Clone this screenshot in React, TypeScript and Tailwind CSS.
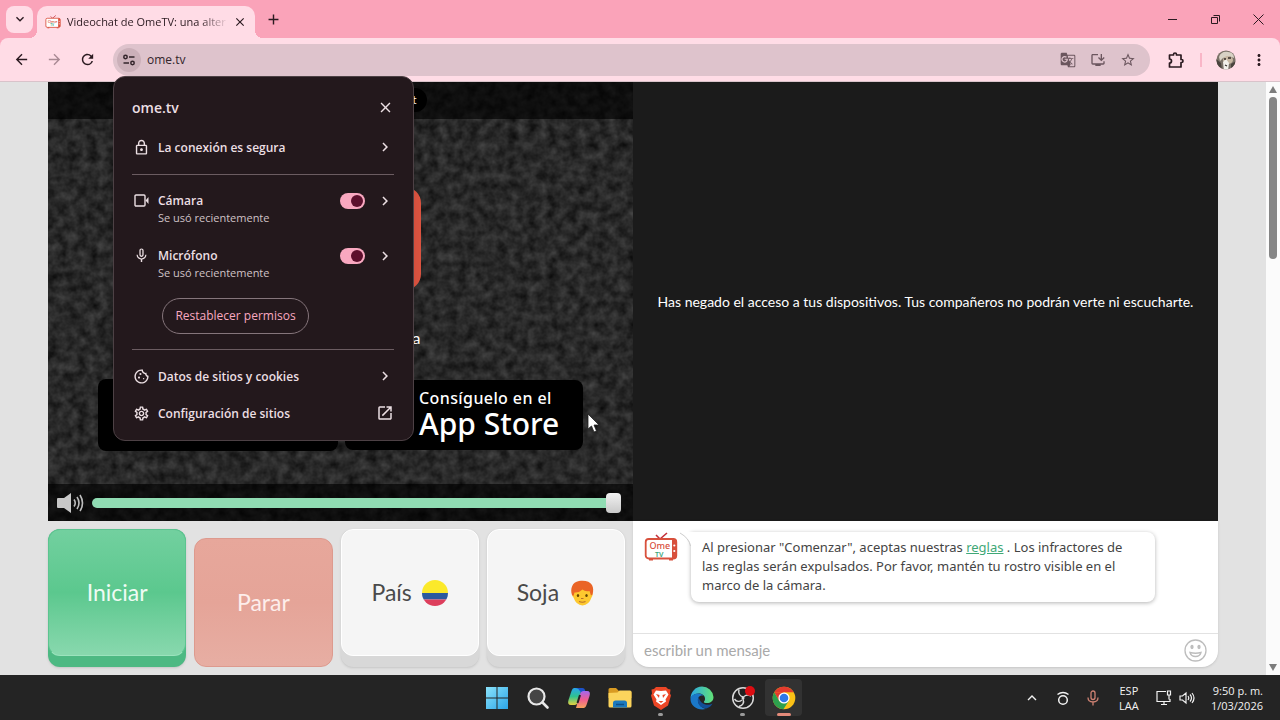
import React from 'react';
import type { ReactNode } from 'react';
import {
  MdAdd,
  MdArrowBack,
  MdArrowForward,
  MdChevronRight,
  MdClose,
  MdGTranslate,
  MdKeyboardArrowDown,
  MdMoreVert,
  MdOpenInNew,
  MdOutlineCookie,
  MdOutlineInstallDesktop,
  MdOutlineLock,
  MdOutlineSettings,
  MdMicNone,
  MdRefresh,
  MdStarBorder,
} from 'react-icons/md';

/* ---------- Drawings ---------- */

function OmeLogo({ className }: { className?: string }) {
  return (
    <svg viewBox="0 0 34 30" className={className} aria-hidden="true">
      <path d="M12 3l4 4 7-6" fill="none" stroke="#c4303a" strokeWidth="1.600" />
      <rect x="5" y="26" width="4" height="2.500" fill="#d8503c" />
      <rect x="25" y="26" width="4" height="2.500" fill="#d8503c" />
      <rect x="1.700" y="7" width="30.600" height="19.500" rx="3" fill="#fff" stroke="#d8503c" strokeWidth="1.800" />
      <path d="M28 7h2a2.500 2.500 0 0 1 2.500 2.500V24a2.500 2.500 0 0 1-2.500 2.500h-2z" fill="#d8503c" />
      <circle cx="30.300" cy="13.500" r="1.100" fill="#fff" />
      <circle cx="30.300" cy="19" r="1.100" fill="#fff" />
      <text x="5.500" y="17" fontSize="9" fontFamily="Noto Sans, sans-serif" fontWeight="500" fill="#d8503c">Ome</text>
      <text x="11" y="24.500" fontSize="7" fontFamily="Noto Sans, sans-serif" fontWeight="600" fill="#3da77c">TV</text>
    </svg>
  );
}

function TuneIcon() {
  return (
    <svg viewBox="0 0 14 14" className="size-3.5" fill="none" stroke="#33252b" strokeWidth="1.500">
      <circle cx="3.500" cy="4" r="1.700" />
      <path d="M7 4h5.500M1.500 10H7" />
      <circle cx="10.500" cy="10" r="1.700" />
    </svg>
  );
}

function PuzzleIcon() {
  return (
    <svg viewBox="0 0 18 18" className="size-[18px]" fill="none" stroke="currentColor" strokeWidth="1.700" strokeLinejoin="round">
      <path d="M2.500 4h4V3.500q0-1.500 1.500-1.500t1.500 1.500V4h4.500v4.500h.5q1.500 0 1.500 1.500t-1.500 1.500H14V16H2.500v-4q2 0 2-2t-2-2z" />
    </svg>
  );
}

function CameraIcon() {
  return (
    <svg viewBox="0 0 17 17" className="size-[17px]" fill="none" stroke="currentColor" strokeWidth="1.400">
      <rect x="2" y="3" width="10" height="11" rx="1" />
      <path d="M12.500 8.500L15.500 5v7z" fill="currentColor" stroke="none" />
    </svg>
  );
}

function Static() {
  return (
    <svg className="absolute inset-0 size-full" aria-hidden="true">
      <filter id="static" x="0" y="0" width="100%" height="100%" colorInterpolationFilters="sRGB">
        <feTurbulence type="fractalNoise" baseFrequency="0.1" numOctaves="3" seed="8" />
        <feColorMatrix values=".26 0 0 0 .03  .26 0 0 0 .03  .26 0 0 0 .03  0 0 0 0 1" />
      </filter>
      <rect width="100%" height="100%" filter="url(#static)" />
    </svg>
  );
}

function Avatar() {
  return (
    <svg viewBox="0 0 20 20" className="size-5">
      <clipPath id="face"><circle cx="10" cy="10" r="9.600" /></clipPath>
      <g clipPath="url(#face)">
        <rect width="20" height="20" fill="#7b7268" />
        <path d="M3 7c1-4 5-6 9-5 4 0 6 3 6 6l-5-2-6 2-3 3z" fill="#d8d2c5" />
        <ellipse cx="12" cy="10" rx="5" ry="4" fill="#c9b9a4" />
        <path d="M7 12l3-3 3 4-1 8H8z" fill="#f3f0ea" />
        <path d="M8 9h2M12 8h3M9 15l2 1" stroke="#332d29" strokeWidth="1.300" />
        <path d="M0 9l5 4 1 7H0zM15 14l5-3v9h-5z" fill="#4a433d" />
      </g>
    </svg>
  );
}

function SpeakerIcon() {
  return (
    <svg viewBox="0 0 27 22" className="h-[22px] w-[27px] shrink-0">
      <path d="M0 7q0-1 1-1h6l7-5v20l-7-5H1q-1 0-1-1z" fill="#c8c8c8" />
      <g fill="none" stroke="#bdbdbd" strokeWidth="1.600">
        <path d="M17 7.500q2.500 3.500 0 7" />
        <path d="M20 5q4 6 0 12" />
        <path d="M23 3q5 8 0 16" />
      </g>
    </svg>
  );
}

function ColombiaFlag() {
  return (
    <svg viewBox="0 0 26 26" className="size-[26px]">
      <clipPath id="flag"><circle cx="13" cy="13" r="13" /></clipPath>
      <g clipPath="url(#flag)">
        <rect width="26" height="13" fill="#fbe92a" />
        <rect y="13" width="26" height="6.500" fill="#2c5a9e" />
        <rect y="19.500" width="26" height="7" fill="#dd3e5c" />
      </g>
    </svg>
  );
}

function BoyFace() {
  return (
    <svg viewBox="0 0 26 26" className="size-[26px]">
      <path d="M4 12q-2 3 .5 5.500Q7 25 13.500 25.500 20 25 22.500 17.500q2-3 .5-5.500L20 6H7z" fill="#fdc82f" />
      <path d="M3 15C1 9 3 2 10 1c6-1 11 .5 13 4 1.500 3 1.500 6 .5 9.500l-1.500 1-1.500-4.500Q16 12 13.500 9.500 10 13 5.500 12.500L4.500 16z" fill="#ea6426" />
      <ellipse cx="9" cy="15.500" rx="1.200" ry="1.500" fill="#664500" />
      <ellipse cx="17.500" cy="15.500" rx="1.200" ry="1.500" fill="#664500" />
      <path d="M12 18.500h2.500M10 21.500q3.500 1.500 6.500 0" stroke="#b9702a" strokeWidth="1.100" fill="none" />
    </svg>
  );
}

function Cursor() {
  return (
    <svg viewBox="0 0 13 20" className="h-5 w-[13px]">
      <path d="M1 1v15l3.500-3 2.500 6 2.500-1-2.500-6H12z" fill="#fff" stroke="#222" strokeWidth=".8" />
    </svg>
  );
}

/* ---------- Browser chrome ---------- */

function TabStrip() {
  return (
    <div className="flex h-[38px] shrink-0 items-center bg-[#faa3b9] pl-1.5 text-[#2b1a20]">
      <button aria-label="Buscar pestañas" className="flex size-[27px] items-center justify-center rounded-lg bg-[#ffdce6]">
        <MdKeyboardArrowDown className="size-4" />
      </button>
      <div className="relative ml-1 flex h-8 w-[218px] items-center self-end rounded-t-[10px] bg-[#ffdce6] pr-2 pl-2">
        <span className="absolute bottom-0 -left-2 size-2 bg-[radial-gradient(circle_at_0_0,transparent_8px,#ffdce6_8px)]" />
        <span className="absolute -right-2 bottom-0 size-2 bg-[radial-gradient(circle_at_100%_0,transparent_8px,#ffdce6_8px)]" />
        <OmeLogo className="h-3.5 w-4 shrink-0" />
        <span className="ml-1.5 w-[162px] overflow-hidden text-[11px] whitespace-nowrap [mask-image:linear-gradient(to_right,black_82%,transparent)]">
          Videochat de OmeTV: una alter
        </span>
        <button aria-label="Cerrar pestaña" className="ml-auto"><MdClose className="size-3.5" /></button>
      </div>
      <button aria-label="Nueva pestaña" className="ml-2.5"><MdAdd className="size-[17px]" /></button>
      <div className="ml-auto flex items-center gap-8 pr-4">
        <button aria-label="Minimizar">
          <svg viewBox="0 0 11 11" className="size-[11px]"><path d="M1 5.500h9" stroke="currentColor" /></svg>
        </button>
        <button aria-label="Restaurar">
          <svg viewBox="0 0 11 11" className="size-[11px]" fill="none" stroke="currentColor"><path d="M1.500 3.500h6v6h-6zM3.500 1.500h6v6" /></svg>
        </button>
        <button aria-label="Cerrar">
          <svg viewBox="0 0 11 11" className="size-[11px]" stroke="currentColor"><path d="M.5.5l10 10M10.500.5l-10 10" /></svg>
        </button>
      </div>
    </div>
  );
}

function Toolbar() {
  return (
    <div className="shrink-0 bg-[#faa3b9]">
      <div className="flex h-11 items-center rounded-t-lg border-b border-[#d9c3ca] bg-[#ffdce6] pr-3 pl-3 text-[#2b1a20]">
        <div className="flex w-[101px] gap-4 pl-px">
          <button aria-label="Atrás"><MdArrowBack className="size-[17px]" /></button>
          <button aria-label="Adelante" className="text-[#a98a94]"><MdArrowForward className="size-[17px]" /></button>
          <button aria-label="Recargar"><MdRefresh className="size-[17px]" /></button>
        </div>
        <div className="relative flex h-8 flex-1 items-center gap-3.5 rounded-full bg-[#dec3cc] pr-3.5 pl-1 text-[#6b565e]">
          <button aria-label="Información del sitio" className="flex size-6 items-center justify-center rounded-full bg-[#cbb0b9]">
            <TuneIcon />
          </button>
          <input
            aria-label="Dirección"
            defaultValue="ome.tv"
            className="-ml-2 min-w-0 flex-1 bg-transparent text-[12px] text-[#33252b] outline-none"
          />
          <button aria-label="Traducir"><MdGTranslate className="size-4" /></button>
          <button aria-label="Instalar"><MdOutlineInstallDesktop className="size-4" /></button>
          <button aria-label="Favorito"><MdStarBorder className="size-4" /></button>
          <SiteInfo />
        </div>
        <button aria-label="Extensiones" className="ml-[17px]"><PuzzleIcon /></button>
        <span className="mr-3.5 ml-[15px] h-3.5 w-0.5 bg-[#f9b5c7]" />
        <button aria-label="Perfil"><Avatar /></button>
        <button aria-label="Menú" className="ml-3.5"><MdMoreVert className="size-[18px]" /></button>
      </div>
    </div>
  );
}

/* ---------- Site info bubble ---------- */

function InfoRow({ icon, label, end }: { icon: ReactNode; label: string; end: ReactNode }) {
  return (
    <button className="flex w-full items-center py-2 text-[12px] leading-[21px] font-semibold text-[#ecdfe3]">
      <span className="flex w-[26px] pl-px text-[17px]">{icon}</span>
      {label}
      <span className="ml-auto flex text-[18px]">{end}</span>
    </button>
  );
}

function PermissionRow({ id, icon, label }: { id: string; icon: ReactNode; label: string }) {
  return (
    <div className="flex text-[#ecdfe3]">
      <span className="flex h-[18px] w-[26px] items-center pl-px text-[17px]">{icon}</span>
      <label htmlFor={id} className="text-[12px] leading-[18px] font-semibold">
        {label}
        <span className="block text-[11px] leading-4 font-normal text-[#cfc2c6]">Se usó recientemente</span>
      </label>
      <input
        id={id}
        type="checkbox"
        defaultChecked
        className="mt-px ml-auto h-4 w-[25px] appearance-none rounded-full bg-[#f9a8c0] before:mt-0.5 before:ml-[11px] before:block before:size-3 before:rounded-full before:bg-[#5c0f2c]"
      />
      <button aria-label={`Detalles de ${label}`} className="ml-[11px] flex h-[18px] items-center">
        <MdChevronRight className="size-[18px]" />
      </button>
    </div>
  );
}

function SiteInfo() {
  return (
    <section className="absolute top-full left-0 z-20 w-[301px] rounded-xl border border-[#4d4145] bg-[#23181c] pt-[19px] pr-[19px] pb-2 pl-[18px] shadow-lg">
      <header className="flex h-6 items-center justify-between text-[#ecdfe3]">
        <h2 className="text-[14px] font-semibold">ome.tv</h2>
        <button aria-label="Cerrar"><MdClose className="size-[17px]" /></button>
      </header>
      <div className="mt-[9px]">
        <InfoRow icon={<MdOutlineLock />} label="La conexión es segura" end={<MdChevronRight />} />
      </div>
      <hr className="mt-2 border-[#6b5c61]" />
      <div className="mt-[17px] flex flex-col gap-[21px]">
        <PermissionRow id="camara" icon={<CameraIcon />} label="Cámara" />
        <PermissionRow id="micro" icon={<MdMicNone />} label="Micrófono" />
      </div>
      <button className="mt-[17px] ml-[30px] h-9 w-[147px] rounded-full border border-[#85757b] text-[12px] font-medium text-[#f9a8c0]">
        Restablecer permisos
      </button>
      <hr className="mt-[15px] mb-2 border-[#6b5c61]" />
      <InfoRow icon={<MdOutlineCookie />} label="Datos de sitios y cookies" end={<MdChevronRight />} />
      <InfoRow icon={<MdOutlineSettings />} label="Configuración de sitios" end={<MdOpenInNew />} />
    </section>
  );
}

/* ---------- Page ---------- */

function RemoteVideo() {
  return (
    <div className="relative flex flex-col overflow-hidden bg-[#262626] text-white">
      <Static />
      <div className="relative flex h-[37px] justify-center bg-black/65 pt-1.5">
        <div className="h-6 w-[172px] rounded-full bg-black pr-2.5 text-right text-[12px] leading-6">t</div>
      </div>
      <div className="relative flex flex-1 flex-col items-center pt-[68px]">
        <div className="h-[103px] w-40 rounded-2xl border-[10px] border-[#dc5441] bg-white" />
        <p className="mt-[38px] w-40 text-right text-[16px] leading-5">a</p>
        <div className="mt-[31px] flex gap-[7px]">
          <a href="#play" aria-label="Google Play" className="h-[72px] w-60 rounded-lg bg-black" />
          <a href="#appstore" className="mt-px flex h-[70px] w-[238px] flex-col rounded-lg bg-black pt-2 pl-[74px] font-['Noto_Sans',sans-serif] font-medium">
            <span className="text-[16px] leading-5 tracking-wide">Consíguelo en el</span>
            <span className="text-[30px] leading-8">App Store</span>
          </a>
        </div>
        <div className="absolute top-[294px] right-[33px]"><Cursor /></div>
      </div>
      <div className="relative flex h-[37px] items-center gap-2 bg-black/65 pr-3 pl-[9px]">
        <SpeakerIcon />
        <input
          type="range"
          aria-label="Volumen"
          defaultValue={100}
          className="h-5 min-w-0 flex-1 appearance-none bg-transparent [&::-webkit-slider-runnable-track]:h-2.5 [&::-webkit-slider-runnable-track]:rounded-full [&::-webkit-slider-runnable-track]:bg-[#90dcb3] [&::-webkit-slider-thumb]:-mt-[5px] [&::-webkit-slider-thumb]:h-5 [&::-webkit-slider-thumb]:w-[15px] [&::-webkit-slider-thumb]:appearance-none [&::-webkit-slider-thumb]:rounded [&::-webkit-slider-thumb]:bg-linear-to-b [&::-webkit-slider-thumb]:from-[#f2f2f2] [&::-webkit-slider-thumb]:to-[#c9c9c9]"
        />
      </div>
    </div>
  );
}

function Controls() {
  return (
    <div className="grid grid-cols-4 gap-2 py-2 pr-2 text-[23px] text-[#4a4a4a]">
      <button className="flex rounded-xl bg-[#4db983] pb-[11px] text-[#effbf4] shadow">
        <span className="flex flex-1 items-center justify-center rounded-xl border border-[#5cc490] border-b-[#9be3bd] bg-linear-to-b from-[#72d09f] via-[#5bc88e] to-[#88d8ae]">Iniciar</span>
      </button>
      <button className="mt-[9px] rounded-xl border border-[#dd9a8e] bg-linear-to-b from-[#e7a79b] via-[#e5a498] to-[#e7aea3] text-[#fdeeeb]">
        Parar
      </button>
      <button className="flex rounded-xl bg-[#d8d8d8] pb-[11px] shadow">
        <span className="flex flex-1 items-center justify-center gap-2.5 rounded-xl border border-white bg-[#f5f5f5]">País <ColombiaFlag /></span>
      </button>
      <button className="flex rounded-xl bg-[#d8d8d8] pb-[11px] shadow">
        <span className="flex flex-1 items-center justify-center gap-2.5 rounded-xl border border-white bg-[#f5f5f5]">Soja <BoyFace /></span>
      </button>
    </div>
  );
}

function Chat() {
  return (
    <div className="mb-2 flex flex-col rounded-b-2xl bg-white shadow">
      <div className="flex flex-1 items-start pt-[11px] pl-[11px]">
        <OmeLogo className="h-[30px] w-[34px]" />
        <div className="relative ml-[13px] w-[464px] rounded-lg rounded-tl-none bg-white pt-1.5 pr-4 pb-[7px] pl-[11px] font-['Noto_Sans',sans-serif] text-[13px] leading-[19px] text-[#444] shadow-[0_1px_4px_rgba(0,0,0,0.3)]">
          <svg viewBox="0 0 11 14" className="absolute top-0 -left-[11px] h-3.5 w-[11px]">
            <path d="M0 0h11v14Q10 6 0 1z" fill="#fff" />
            <path d="M0 1q9 5 10.500 13" fill="none" stroke="#ccc" />
          </svg>
          Al presionar "Comenzar", aceptas nuestras{' '}
          <a href="#reglas" className="text-[#3fa877] underline">reglas</a> . Los infractores de las reglas serán
          expulsados. Por favor, mantén tu rostro visible en el marco de la cámara.
        </div>
      </div>
      <div className="flex h-[34px] items-center border-t border-[#e2e2e2] pr-[11px] pl-[11px]">
        <input
          aria-label="Mensaje"
          placeholder="escribir un mensaje"
          className="min-w-0 flex-1 text-[15px] outline-none placeholder:text-[#a9a9a9]"
        />
        <button aria-label="Emojis">
          <svg viewBox="0 0 23 23" className="size-[23px]" fill="none" stroke="#bdbdbd" strokeWidth="1.300">
            <circle cx="11.500" cy="11.500" r="10.500" />
            <ellipse cx="8" cy="8" rx="1" ry="1.500" fill="#bdbdbd" />
            <ellipse cx="15" cy="8" rx="1" ry="1.500" fill="#bdbdbd" />
            <path d="M6 13.500q5.500 1.500 11 0-1 4-5.500 4t-5.500-4z" />
          </svg>
        </button>
      </div>
    </div>
  );
}

function ScrollBar() {
  return (
    <div className="flex w-3.5 shrink-0 flex-col items-center bg-[#fbfbfb] py-1">
      <svg viewBox="0 0 8 7" className="h-[7px] w-2"><path d="M4 0l4 7H0z" fill="#7c7c7c" /></svg>
      <span className="mt-1 h-[162px] w-2 rounded-full bg-[#858585]" />
      <svg viewBox="0 0 8 7" className="mt-auto h-[7px] w-2"><path d="M4 7l4-7H0z" fill="#7c7c7c" /></svg>
    </div>
  );
}

/* ---------- Taskbar ---------- */

function TaskIcon({ label, active, bar, children }: { label: string; active?: boolean; bar?: string; children: ReactNode }) {
  return (
    <button
      aria-label={label}
      className={`relative flex size-[37px] items-center justify-center rounded ${active ? 'bg-[#323232]' : ''}`}
    >
      <svg viewBox="0 0 24 24" className="size-6">{children}</svg>
      {bar && <span className={`absolute bottom-0 h-[3px] rounded-full ${bar}`} />}
    </button>
  );
}

function Taskbar() {
  return (
    <footer className="grid h-[45px] shrink-0 grid-cols-[1fr_auto_1fr] items-center bg-[#242424] text-[#f2f2f2]">
      <div />
      <nav className="flex gap-1">
        <TaskIcon label="Inicio">
          <linearGradient id="win" x2="1" y2="1"><stop stopColor="#8be3fb" /><stop offset="1" stopColor="#2ba5e8" /></linearGradient>
          <path d="M1 1h10.500v10.500H1zM12.500 1H23v10.500H12.500zM1 12.500h10.500V23H1zM12.500 12.500H23V23H12.500z" fill="url(#win)" />
        </TaskIcon>
        <TaskIcon label="Buscar">
          <circle cx="10.500" cy="10.500" r="8" fill="#454545" stroke="#e8e8e8" strokeWidth="2.200" />
          <path d="M16.500 16.500l5 5" stroke="#e8e8e8" strokeWidth="2.600" strokeLinecap="round" />
        </TaskIcon>
        <TaskIcon label="Copilot">
          <linearGradient id="cp1" x2="0" y2="1"><stop stopColor="#28a6ee" /><stop offset=".5" stopColor="#2fc38f" /><stop offset="1" stopColor="#e8d13f" /></linearGradient>
          <linearGradient id="cp2" x2="0" y2="1"><stop stopColor="#a267f0" /><stop offset=".5" stopColor="#ef5c92" /><stop offset="1" stopColor="#f7a35d" /></linearGradient>
          <path d="M7 2h8l-4 14q-1 3-3.500 3H4q-4 0-2.500-5l3-9q1-3 2.500-3z" fill="url(#cp1)" />
          <path d="M8 2h7.500q2 0 2.500 2l.5 2H15q-2 0-2.500-1.500Q11.500 2 8 2z" fill="#1c52c9" />
          <path d="M17 22H9l4-14q1-3 3.500-3H20q4 0 2.500 5l-3 9q-1 3-2.500 3z" fill="url(#cp2)" />
          <path d="M13 9l-2.500 8" stroke="#242424" strokeWidth="2" />
        </TaskIcon>
        <TaskIcon label="Explorador de archivos">
          <path d="M.5 3.500q0-1.500 1.500-1.500h6l3 3H22q1.500 0 1.500 1.500V12H.5z" fill="#d99b22" />
          <path d="M.5 7l9-.5 2-2H22q1.500 0 1.500 1.500v14q0 1.500-1.500 1.500H2Q.5 21.500.5 20z" fill="#fbd45c" />
          <path d="M5 21.500V17q0-2.500 2.500-2.500h9Q19 14.500 19 17v4.500z" fill="#1b79bd" />
          <path d="M8 18.500h8" stroke="#0d4f87" strokeWidth="1.500" />
        </TaskIcon>
        <TaskIcon label="Brave" bar="w-[5px] bg-[#9a9a9a]">
          <path d="M7 1h10l2 2 2.500.5-.5 4 1 2-3 10-7 4.500-7-4.500-3-10 1-2-.5-4L5 3z" fill="#ec4626" />
          <path d="M12 5l5-.5 2.500 4-3 5 .5 2-5 3.500-5-3.500.5-2-3-5L7 4.500z" fill="#fff" />
          <path d="M7 8l3.500 1-.5 3zM17 8l-3.500 1 .5 3zM9.500 15h5L12 17z" fill="#ec4626" />
        </TaskIcon>
        <TaskIcon label="Edge">
          <linearGradient id="edge1" x2="1"><stop stopColor="#2aa7e6" /><stop offset="1" stopColor="#62e276" /></linearGradient>
          <path d="M12 .5A11.500 11.500 0 0 1 23.500 11c0 4-3 6-6.500 6-2 0-3.500-.5-3-1.500 1-1 1-2 1-3 0-3-3-5-6.500-5C4 7.500.5 11 .5 13 .5 6 5.500.5 12 .5z" fill="url(#edge1)" />
          <path d="M.5 13c0-3 3.500-5.500 8-5.500 2 0 4 1 5 2C9 9 7.500 12 8 15c.5 4 4 7 8 8-8 2-15.500-3-15.500-10z" fill="#1b78c8" />
          <path d="M8.500 11c-2 6 1 11 8 11.500 3-1 5-3 6-5-3 2-7 1.500-9.500 0-2-1-3.500-3.500-4.500-6.500z" fill="#124f98" />
        </TaskIcon>
        <TaskIcon label="OBS Studio" bar="w-[5px] bg-[#9a9a9a]">
          <circle cx="12" cy="12" r="10.300" fill="#202020" stroke="#d9d9d9" strokeWidth="1.500" />
          <path d="M8 3.500c-1 4 1 6.500 4 7.500M20 10c-4-2-7-.5-8 2M8 20.500c4-1 5.500-4 4-7.500M3.500 13c2 3 5 3 7.500 1" fill="none" stroke="#d9d9d9" strokeWidth="1.400" />
          <circle cx="12" cy="12" r="1.500" fill="#d9d9d9" />
          <circle cx="19" cy="5" r="5" fill="#dd0d12" />
        </TaskIcon>
        <TaskIcon label="Chrome" active bar="w-3.5 bg-[#e58b7a]">
          <circle cx="12" cy="12" r="11.300" fill="#fbc116" />
          <path d="M2.200 6.350A11.300 11.300 0 0 1 21.800 6.350H12z" fill="#e33b2e" />
          <path d="M2.200 6.350h9.800l-3.500 3-1.400 5.400z" fill="#e33b2e" />
          <path d="M2.200 6.350l4.900 8.450L12 17.600l4.900-2.800-5.500 8.500A11.300 11.300 0 0 1 2.200 6.350z" fill="#2da04e" />
          <circle cx="12" cy="12" r="5.600" fill="#fff" />
          <circle cx="12" cy="12" r="4.300" fill="#2f78e8" />
        </TaskIcon>
      </nav>
      <div className="flex items-center justify-end pr-[17px] text-[11px] leading-[15px]">
        <svg viewBox="0 0 10 6" className="mr-[19px] h-1.5 w-2.5" fill="none" stroke="currentColor" strokeWidth="1.400"><path d="M1 5l4-4 4 4" /></svg>
        <svg viewBox="0 0 14 16" className="mr-[17px] h-4 w-3.5" fill="none" stroke="currentColor" strokeWidth="1.500">
          <path d="M1.500 4.500q5.500-4 11 0" /><circle cx="7" cy="10" r="4.300" />
        </svg>
        <svg viewBox="0 0 12 16" className="mr-5 h-4 w-3 text-[#cf8273]" fill="none" stroke="currentColor" strokeWidth="1.300">
          <rect x="4" y="1" width="4" height="8.500" rx="2" /><path d="M1 7.500q0 4.500 5 4.500t5-4.500M6 12v3.500" />
        </svg>
        <span className="w-5 text-center text-[11px]">ESP LAA</span>
        <svg viewBox="0 0 16 16" className="ml-[17px] size-4" fill="none" stroke="currentColor" strokeWidth="1.200">
          <path d="M10 1.500H1v10h13V9M5 14.500h6M8 11.500v3M11.500 1h3v4h-3zM13 5v4.500" />
        </svg>
        <svg viewBox="0 0 16 14" className="ml-[7px] h-3.5 w-4" fill="none" stroke="currentColor" strokeWidth="1.200">
          <path d="M1 5h2.500L7 2v10L3.500 9H1zM9 5q1.500 2 0 4M11 3.500q3 3.500 0 7M13 2q4 5 0 10" />
        </svg>
        <time className="ml-4 text-right whitespace-nowrap">9:50 p. m.<br />1/03/2026</time>
      </div>
    </footer>
  );
}

export default function App() {
  return (
    <div className="flex h-screen flex-col overflow-hidden bg-[#e2e2e2] font-['Open_Sans','Noto_Sans',sans-serif]">
      <TabStrip />
      <Toolbar />
      <div className="flex min-h-0 flex-1">
        <main className="grid flex-1 grid-cols-2 grid-rows-[1fr_154px] pr-12 pl-12 font-['Lato','Noto_Sans',sans-serif]">
          <RemoteVideo />
          <div className="flex items-center justify-center bg-[#1b1b1b] px-4 text-center text-[14px] text-white">
            Has negado el acceso a tus dispositivos. Tus compañeros no podrán verte ni escucharte.
          </div>
          <Controls />
          <Chat />
        </main>
        <ScrollBar />
      </div>
      <Taskbar />
    </div>
  );
}
